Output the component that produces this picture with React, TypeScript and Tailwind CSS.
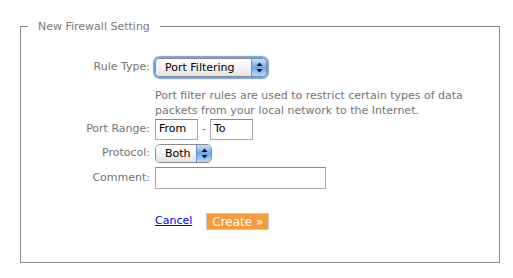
import React from "react";

function Arrows() {
  return (
    <svg width="7" height="11" viewBox="0 0 7 11">
      <path d="M3.5 0.5 L6.5 4 L0.5 4 Z" fill="#111" />
      <path d="M3.5 10.5 L6.5 7 L0.5 7 Z" fill="#111" />
    </svg>
  );
}

function AquaSelect({ label, width, focused }: { label: string; width: string; focused?: boolean }) {
  return (
    <div
      className={
        "flex h-[19px] rounded-[5px] border border-[#8b8b8b] overflow-hidden " +
        width +
        (focused ? " shadow-[0_0_1px_2px_rgba(86,145,230,0.85)] border-[#4a76c0]" : "")
      }
    >
      <div className="flex-1 flex items-center pl-[9px] bg-gradient-to-b from-white via-[#f4f4f4] to-[#e2e2e2] text-[11px] text-black leading-none">
        {label}
      </div>
      <div className="w-[15px] flex items-center justify-center border-l border-[#6d8fc7] bg-gradient-to-b from-[#c9e0fa] via-[#6aa6ee] to-[#b8d8fb]">
        <Arrows />
      </div>
    </div>
  );
}

function Label({ children }: { children: React.ReactNode }) {
  return <div className="w-[130px] shrink-0 text-right pr-[1px] text-[#747474]">{children}</div>;
}

export default function App() {
  return (
    <div className="w-[513px] h-[278px] bg-white overflow-hidden" style={{ fontFamily: '"DejaVu Sans", Verdana, sans-serif' }}>
      <fieldset className="mt-[19px] ml-[20px] w-[480px] h-[244px] border border-[#8c8c8c] text-[11px]">
        <legend className="ml-[7px] px-[10px] leading-[15px] text-[#7a7a7a]">New Firewall Setting</legend>
        <div className="flex flex-col pt-[24px]">
          <div className="flex items-center h-[19px]">
            <Label>Rule Type:</Label>
            <div className="ml-[4px]">
              <AquaSelect label="Port Filtering" width="w-[112px]" focused />
            </div>
          </div>
          <div className="flex mt-[11px]">
            <div className="w-[134px] shrink-0" />
            <div className="w-[330px] leading-[15px] text-[#747474]">
              Port filter rules are used to restrict certain types of data packets from your local network to the Internet.
            </div>
          </div>
          <div className="flex items-center mt-[1px] h-[21px]">
            <Label>Port Range:</Label>
            <div className="ml-[4px] flex items-center">
              <div className="w-[43px] h-[21px] border border-[#a9a9a9] border-t-[#8a8a8a] flex items-center pl-[3px] text-black">From</div>
              <div className="w-[12px] text-center text-[#747474]">-</div>
              <div className="w-[43px] h-[21px] border border-[#a9a9a9] border-t-[#8a8a8a] flex items-center pl-[3px] text-black">To</div>
            </div>
          </div>
          <div className="flex items-center mt-[4px] h-[19px]">
            <Label>Protocol:</Label>
            <div className="ml-[4px]">
              <AquaSelect label="Both" width="w-[57px]" />
            </div>
          </div>
          <div className="flex items-center mt-[4px] h-[22px]">
            <Label>Comment:</Label>
            <div className="ml-[4px] w-[171px] h-[22px] border border-[#a9a9a9] border-t-[#8a8a8a]" />
          </div>
          <div className="flex items-center mt-[24px] h-[17px]">
            <div className="w-[134px] shrink-0" />
            <a href="#" className="text-[#0000ee] underline">Cancel</a>
            <button className="ml-[14px] w-[63px] h-[17px] bg-[#f99a3b] border border-[#c8c8c8] text-white text-[12px] leading-none flex items-center justify-center">
              Create »
            </button>
          </div>
        </div>
      </fieldset>
    </div>
  );
}
